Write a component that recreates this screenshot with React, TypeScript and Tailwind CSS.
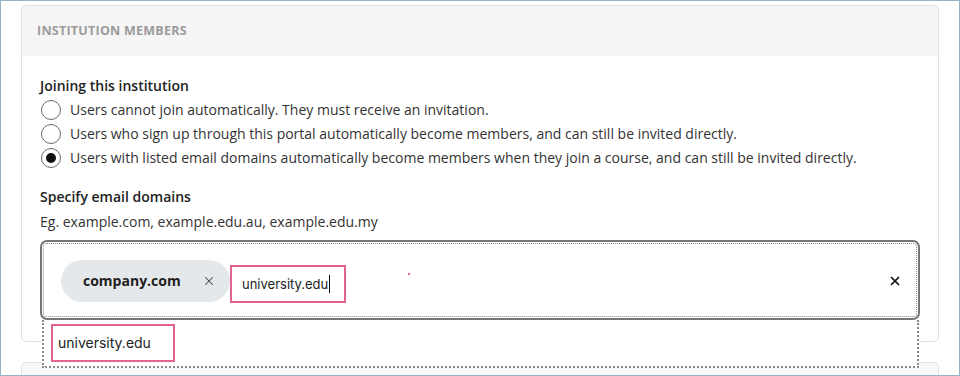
import { X } from 'lucide-react';

const options = [
  'Users cannot join automatically. They must receive an invitation.',
  'Users who sign up through this portal automatically become members, and can still be invited directly.',
  'Users with listed email domains automatically become members when they join a course, and can still be invited directly.',
];

function Radio({ checked }: { checked: boolean }) {
  return (
    <span className="w-[20px] h-[20px] shrink-0 rounded-full border border-[#6a6a6a] bg-white flex items-center justify-center">
      {checked && <span className="w-[10px] h-[10px] rounded-full bg-[#111]" />}
    </span>
  );
}

export default function App() {
  return (
    <div className="w-[960px] h-[376px] border border-[#94b4c1] bg-white overflow-hidden px-[20px] pt-[4px] font-['Open_Sans',sans-serif] text-[#333]">
      <div className="relative h-[337px] rounded-[5px] border border-[#e2e2e2] bg-white">
        <div className="h-[50px] rounded-t-[5px] bg-[#f5f5f5] px-[15px] flex items-center text-[12.5px] font-bold tracking-[0.25px] text-[#9b9b9b] uppercase">
          Institution members
        </div>

        <div className="px-[18px] pt-[18px] text-[14px] leading-[24px]">
          <div className="font-semibold text-[#222]">Joining this institution</div>
          {options.map((label, i) => (
            <div key={label} className="flex items-center gap-[9px] pl-[1px]">
              <Radio checked={i === 2} />
              <span>{label}</span>
            </div>
          ))}

          <div className="mt-[15px] font-semibold text-[#222]">Specify email domains</div>
          <div className="mt-[1px]">Eg. example.com, example.edu.au, example.edu.my</div>

          <div className="relative mt-[6px]">
            <div className="h-[80px] rounded-[7px] border-2 border-[#767676] outline-1 outline-dotted outline-[#888] outline-offset-[-4px] flex items-start pl-[19px] pr-[16px]">
              <div className="mt-[18px] h-[42px] w-[169px] rounded-full bg-[#e5e8eb] flex items-center pl-[22px] pr-[14px]">
                <span className="font-bold text-[#222] flex-1">company.com</span>
                <X size={14} strokeWidth={1.75} className="text-[#444]" />
              </div>
              <div className="mt-[23px] h-[38px] w-[116px] border-2 border-[#e4628f] flex items-center pl-[10px] font-['Inter',sans-serif] text-[13px] text-[#222]">
                <span>university.edu</span>
                <span className="w-px h-[18px] bg-[#111] ml-px" />
              </div>
              <span className="mt-[31px] ml-[62px] w-[2px] h-[2px] bg-[#e4628f]" />
              <div className="flex-1" />
              <X size={14} strokeWidth={3} className="mt-[32px] text-[#111]" />
            </div>

            <div className="absolute left-[2px] right-[1px] top-[80px] h-[48px] bg-white border-2 border-t-0 border-dotted border-[#8a8a8a] pl-[7px] pt-[4px]">
              <div className="h-[38px] w-[124px] border-2 border-[#e4628f] flex items-center pl-[5px] font-['Inter',sans-serif] text-[14px] text-[#222]">
                university.edu
              </div>
            </div>
          </div>
        </div>
      </div>

      <div className="mt-[20px] h-[60px] rounded-[5px] border border-[#e2e2e2] bg-[#f7f7f7]" />
    </div>
  );
}
